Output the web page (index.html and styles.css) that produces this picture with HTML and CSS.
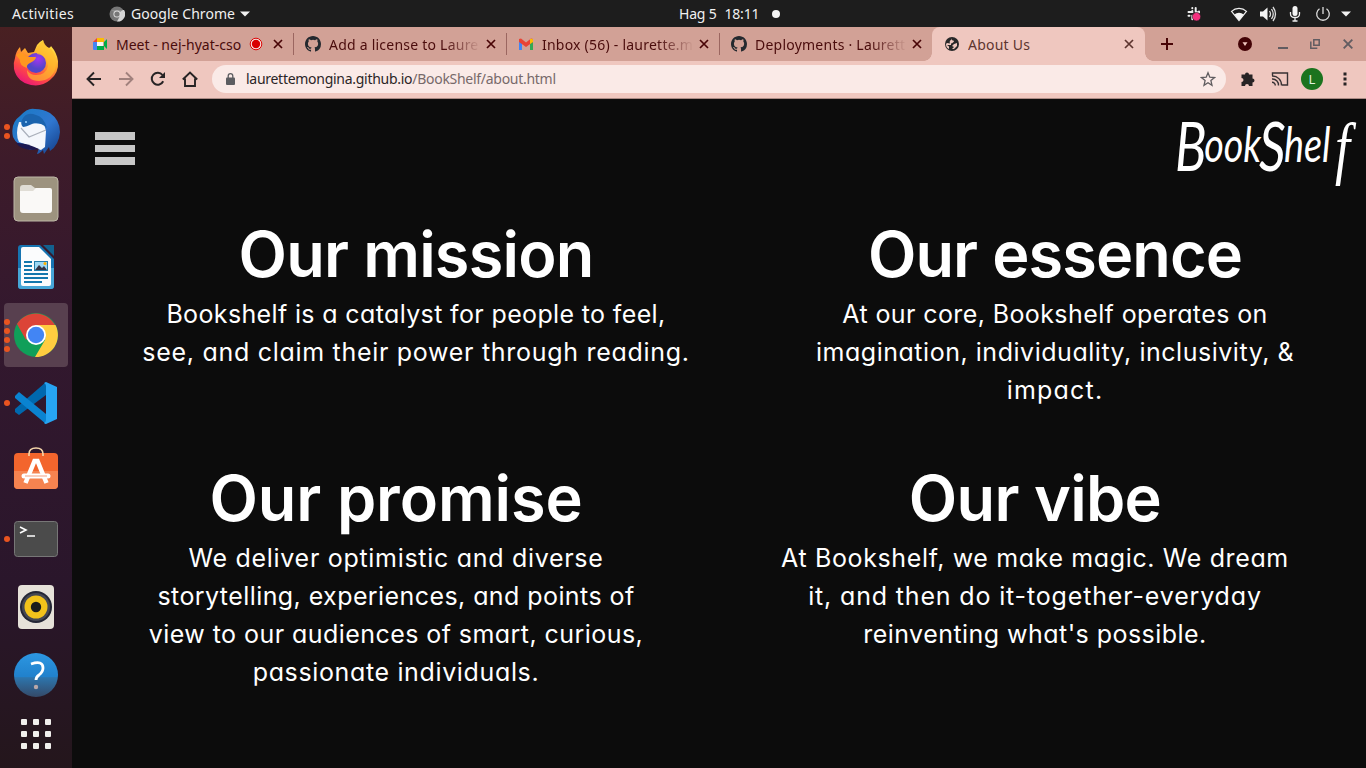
FILE: index.html
```html
<!DOCTYPE html>
<html lang="en">
<head>
<meta charset="utf-8">
<title>About Us</title>
<link rel="stylesheet" href="styles.css">
</head>
<body>
<header class="topbar">
  <span class="activities">Activities</span>
  <svg class="chromium" width="16" height="16" viewBox="0 0 16 16"><circle cx="8" cy="8" r="7.5" fill="#777"/><path d="M8 4h7a7.5 7.5 0 0 1-7 11.5L11 10z" fill="#d5d5d5"/><path d="M2 4h12L8 8z" fill="#8d8d8d"/><circle cx="8" cy="8" r="3.6" fill="#ddd"/><circle cx="8" cy="8" r="2.6" fill="#777"/></svg>
  <span class="app-name">Google Chrome</span>
  <svg class="caret" width="10" height="6" viewBox="0 0 10 6"><path d="M0 .5h10L5 5.5z" fill="#f2f2f2"/></svg>
  <div class="clock"><span>Hag 5</span><span>18:11</span><i class="notice"></i></div>
  <div class="indicators">
    <svg class="slack" width="16" height="16" viewBox="0 0 16 16"><g stroke="#eee" stroke-width="2" stroke-linecap="round"><path d="M6.300 2v.2M6.300 5v1H2.500M9.700 2v4M13 5.500v.8h-2M2.500 9.700h1M6.300 9.700v3.500"/></g><circle cx="10.500" cy="10.700" r="4.200" fill="#f5317f" stroke="#1d1d1d" stroke-width=".6"/></svg>
    <svg class="wifi" width="18" height="16" viewBox="0 0 18 16"><path d="M1.500 5.400a11 11 0 0 1 15 0L9 14.500z" fill="none" stroke="#eee" stroke-width="1.200"/><path d="M4.300 8.500a7 7 0 0 1 9.400 0L9 14.500z" fill="#f4f4f4"/></svg>
    <svg class="volume" width="18" height="16" viewBox="0 0 18 16"><path d="M1 5.500h3L8.500 1.500v13L4 10.500H1z" fill="#f4f4f4"/><path d="M10.500 5q2 3 0 6M12.500 3q3.500 5 0 10M14 1q5 7 0 14" fill="none" stroke="#ddd" stroke-width="1.300"/></svg>
    <svg class="mic" width="12" height="17" viewBox="0 0 12 17"><rect x="3.500" y="1" width="5" height="10" rx="2.500" fill="#f4f4f4"/><path d="M1.500 7v2q0 3.500 4.500 3.500t4.500-3.500V7M6 12.500V16M3.500 16h5" fill="none" stroke="#eee" stroke-width="1.300"/></svg>
    <svg class="power" width="16" height="16" viewBox="0 0 16 16"><path d="M4.500 2.700a6.300 6.300 0 1 0 7 0M8 1v7" fill="none" stroke="#ddd" stroke-width="1.300"/></svg>
    <svg width="10" height="6" viewBox="0 0 10 6"><path d="M0 .5h10L5 5.500z" fill="#f2f2f2"/></svg>
  </div>
</header>
<div class="desktop">
  <nav class="dock">
    <div class="dock-item"><svg width="48" height="48" viewBox="0 0 48 48"><defs><linearGradient id="fx" x1=".8" y1="0" x2=".25" y2="1"><stop offset="0" stop-color="#fff44f"/><stop offset=".4" stop-color="#ffa62b"/><stop offset=".7" stop-color="#ff4c43"/><stop offset="1" stop-color="#e8127c"/></linearGradient><radialGradient id="fp" cx=".6" cy=".3"><stop offset="0" stop-color="#a336f0"/><stop offset="1" stop-color="#5346c8"/></radialGradient></defs><path d="M3 19Q4 12 8 8l1 5 4-4 3 5 6-1 3-7q2-3 6-5 1 6 6 8 2-1 2-2 6 7 7 15 1 12-8 19-8 7-19 5Q5 43 2 30q-1-6 1-11z" fill="url(#fx)"/><circle cx="24" cy="24" r="10" fill="url(#fp)"/><path d="M4 16q4-4 8-1l4 3h8q0 3-6 6-4 2-3 5-8-3-7-8z" fill="#ff9820"/><path d="M31 1q-8 8-6 14 10 1 11 12-2 9-12 9-6 0-9-5 0 11 12 11 15-1 17-16Q44 12 37 9 33 7 31 1z" fill="#ffbd2d" opacity=".65"/></svg></div>
    <div class="dock-item"><i class="dots"><b></b><b></b></i><svg width="48" height="48" viewBox="0 0 48 48"><defs><linearGradient id="tb" x1="0" y1="0" x2="1" y2="1"><stop offset="0" stop-color="#187bc4"/><stop offset=".55" stop-color="#3077d0"/><stop offset="1" stop-color="#123b84"/></linearGradient></defs><path d="M8 9Q16 0 23 2q8 0 15 4 10 7 10 19-1 13-10 19l-1-4-5 7-1-4q-4 4-6 4l2-6-8 2Q4 38 1 30-2 16 8 9z" fill="url(#tb)"/><path d="M7 15l25 2 2 7-1 16-4 3L7 35Q3 27 7 15z" fill="#f4f7fc"/><path d="M9 21l8 9 17-7" fill="none" stroke="#aab0bb" stroke-width="1.200"/><path d="M10 13q4-9 14-5 8 2 11 13-8-7-15-4-6 3-9 3-3-3-1-7z" fill="#1b64ae"/><path d="M4 36q9-1 23 6l-6 1Q9 43 4 36z" fill="#1b1851"/><circle cx="14" cy="15" r="1" fill="#9bd5ff"/></svg></div>
    <div class="dock-item"><svg width="48" height="48" viewBox="0 0 48 48"><rect x="2" y="2" width="44" height="44" rx="4" fill="#9d937f" stroke="#bdb7a7"/><path d="M8 13q0-3 3-3h8l4 3h13v6H8z" fill="#e0ddd5"/><path d="M8 16h13l3-3h14q2 0 2 2v20q0 3-3 3H11q-3 0-3-3z" fill="#faf9f7"/></svg></div>
    <div class="dock-item"><svg width="48" height="48" viewBox="0 0 48 48"><path d="M9 2h19l14 14v27q0 3-3 3H9q-3 0-3-3V5q0-3 3-3z" fill="#1674b1"/><path d="M6 25h36v18q0 3-3 3H9q-3 0-3-3z" fill="#46a6d7"/><path d="M11 4h16l12 12v25q0 2-2 2H11q-2 0-2-2V6q0-2 2-2z" fill="#fbfcfd"/><path d="M31 2h11v11z" fill="#12618f"/><path d="M12 19h8M12 23h8M12 27h8M12 31h24M12 35h24M12 39h18" stroke="#1277ad" stroke-width="2"/><rect x="22.500" y="18.500" width="13" height="9" fill="#9ed8f4" stroke="#227ca9"/><path d="M23 27l4-5 3 3 2-2 3 4z" fill="#334"/><circle cx="33" cy="20.500" r="1.500" fill="#ffb000"/></svg></div>
    <div class="dock-item active"><i class="dots"><b></b><b></b><b></b><b></b></i><svg width="48" height="48" viewBox="0 0 48 48"><circle cx="24" cy="24" r="22" fill="#109f59"/><path d="M5 13A22 22 0 0 1 43 14H24L14 29z" fill="#dc4437"/><path d="M43.500 14A22 22 0 0 1 23 46L33 29q2-8-9-15z" fill="#ffcd40"/><circle cx="24" cy="24" r="10" fill="#fff"/><circle cx="24" cy="24" r="8.200" fill="#4285f4"/></svg></div>
    <div class="dock-item"><i class="dots"><b></b></i><svg width="48" height="48" viewBox="0 0 48 48"><path d="M34 3L3 30v3l4 3 27-20z" fill="#0068ae"/><path d="M3 17l4-4 27 22v10L3 19z" fill="#0a83d1"/><path d="M34 3l11 5v32l-11 5q-1 0-2-1 2-1 2-3V7q0-2-2-3z" fill="#27a4f2"/></svg></div>
    <div class="dock-item"><svg width="48" height="48" viewBox="0 2 48 48"><rect x="2" y="8" width="44" height="36" rx="4" fill="#f3652d"/><path d="M2 26h44v14q0 4-4 4H6q-4 0-4-4z" fill="#f58350"/><path d="M17 11V9q0-6 7-6t7 6v2" fill="none" stroke="#f6d7aa" stroke-width="1.600"/><path d="M13.500 38l9-22h3l9 22" fill="none" stroke="#fff" stroke-width="4.500"/><path d="M12 31h24" stroke="#fff" stroke-width="5" stroke-linecap="round"/><path d="M13 31h22" stroke="#f3a181"/></svg></div>
    <div class="dock-item"><i class="dots"><b></b></i><svg width="48" height="48" viewBox="0 0 48 48"><rect x="2.500" y="6.500" width="43" height="35" rx="3" fill="#4b4b4b" stroke="#777"/><path d="M8 12l6 3-6 3M15 21h8" fill="none" stroke="#fff" stroke-width="1.600"/></svg></div>
    <div class="dock-item"><svg width="48" height="48" viewBox="0 0 48 48"><rect x="6" y="2" width="36" height="44" rx="4" fill="#e6e2d9"/><circle cx="24" cy="24" r="16" fill="#242635"/><circle cx="24" cy="24" r="14" fill="#454853"/><circle cx="24" cy="24" r="11.500" fill="#f2c21b"/><circle cx="24" cy="24" r="5.200" fill="#1c1c1c"/></svg></div>
    <div class="dock-item"><svg width="48" height="48" viewBox="0 0 48 48"><defs><linearGradient id="hp" x1="0" y1="0" x2="0" y2="1"><stop offset="0" stop-color="#2c97e2"/><stop offset=".54" stop-color="#2181cc"/><stop offset=".56" stop-color="#2d75ad"/><stop offset="1" stop-color="#344968"/></linearGradient></defs><circle cx="24" cy="24" r="22" fill="url(#hp)"/><path d="M19 13q12-4 12 4 0 4-4 7-3 2-3 5" fill="none" stroke="#fff" stroke-width="2.800"/><circle cx="24" cy="36" r="2.200" fill="#b9a8a9"/></svg></div>
    <div class="apps"><b></b><b></b><b></b><b></b><b></b><b></b><b></b><b></b><b></b></div>
  </nav>
  <section class="browser">
    <div class="tabs">
      <div class="tab first"><svg class="fav" width="16" height="16" viewBox="0 0 16 16"><path d="M1 6l4-4v4z" fill="#ea4335"/><path d="M5 2h7v4H5z" fill="#fbbc04"/><path d="M1 6h4v8H2q-1 0-1-1z" fill="#4285f4"/><path d="M5 10h7v4H5zM12 6l3-3v10l-3-3z" fill="#00ac47"/><path d="M5 6h6v4H5z" fill="#f6f6f6"/></svg><span class="tab-title">Meet - nej-hyat-cso</span><svg class="rec" width="14" height="14" viewBox="0 0 14 14"><circle cx="7" cy="7" r="5.800" fill="#f6e2de" stroke="#dd0606" stroke-width="1"/><circle cx="7" cy="7" r="4.200" fill="#d90000"/></svg><svg class="close" width="10" height="10" viewBox="0 0 10 10"><path d="M1 1l8 8M9 1L1 9"/></svg></div>
      <div class="tab"><svg class="fav" width="16" height="16" viewBox="0 0 16 16"><path fill="#24292f" d="M8 0C3.580 0 0 3.580 0 8c0 3.540 2.290 6.530 5.470 7.590.4.070.55-.17.55-.38v-1.490c-2.010.37-2.530-.49-2.690-.94-.09-.23-.48-.94-.82-1.130-.28-.15-.68-.52-.01-.53.63-.01 1.080.58 1.230.82.72 1.210 1.870.87 2.330.66.07-.52.28-.87.51-1.070-1.780-.2-3.640-.89-3.640-3.950 0-.87.310-1.590.82-2.150-.08-.2-.36-1.020.08-2.120 0 0 .67-.21 2.200.82a7.500 7.500 0 0 1 4 0c1.530-1.040 2.200-.82 2.200-.82.440 1.100.160 1.920.08 2.120.51.56.82 1.270.82 2.150 0 3.070-1.870 3.750-3.650 3.950.29.25.54.73.54 1.480v2.200c0 .21.150.46.55.38A8 8 0 0 0 16 8c0-4.420-3.580-8-8-8z"/></svg><span class="tab-title fade">Add a license to Laure</span><svg class="close" width="10" height="10" viewBox="0 0 10 10"><path d="M1 1l8 8M9 1L1 9"/></svg></div>
      <div class="tab"><svg class="fav" width="16" height="16" viewBox="0 0 16 16"><path d="M1 4h3v10H1z" fill="#4285f4"/><path d="M12 4h3v10h-3z" fill="#34a853"/><path d="M1 3l2-.5 5 4 5-4 2 .5v3l-7 5-7-5z" fill="#ea4335"/><path d="M12 3q3-1 3 1v2l-3 2z" fill="#fbbc04"/></svg><span class="tab-title fade">Inbox (56) - laurette.m</span><svg class="close" width="10" height="10" viewBox="0 0 10 10"><path d="M1 1l8 8M9 1L1 9"/></svg></div>
      <div class="tab"><svg class="fav" width="16" height="16" viewBox="0 0 16 16"><path fill="#24292f" d="M8 0C3.580 0 0 3.580 0 8c0 3.540 2.290 6.530 5.470 7.590.4.070.55-.17.55-.38v-1.490c-2.010.37-2.530-.49-2.690-.94-.09-.23-.48-.94-.82-1.130-.28-.15-.68-.52-.01-.53.63-.01 1.080.58 1.230.82.72 1.210 1.870.87 2.330.66.07-.52.28-.87.51-1.070-1.780-.2-3.640-.89-3.640-3.950 0-.87.310-1.590.82-2.150-.08-.2-.36-1.020.08-2.120 0 0 .67-.21 2.200.82a7.500 7.500 0 0 1 4 0c1.530-1.040 2.200-.82 2.200-.82.440 1.100.160 1.920.08 2.120.51.56.82 1.270.82 2.150 0 3.070-1.870 3.750-3.650 3.950.29.25.54.73.54 1.480v2.200c0 .21.150.46.55.38A8 8 0 0 0 16 8c0-4.420-3.580-8-8-8z"/></svg><span class="tab-title fade">Deployments · Laurett</span><svg class="close" width="10" height="10" viewBox="0 0 10 10"><path d="M1 1l8 8M9 1L1 9"/></svg></div>
      <div class="tab current"><svg class="fav" width="16" height="16" viewBox="0 0 16 16"><circle cx="8" cy="8" r="7" fill="#282829"/><path d="M8 2q-1 2 1 2.500t0 2-2 .5 0 2H3l2 1.500 0 2.500Q2 12 2 8l1-1 3 .5Q5 5 7 4zM10 8l3-1v3l-3 3-2 0 2-2-2-1z" fill="#efc7bf"/></svg><span class="tab-title">About Us</span><svg class="close" width="10" height="10" viewBox="0 0 10 10"><path d="M1 1l8 8M9 1L1 9"/></svg></div>
      <div class="window-tools">
        <svg width="12" height="12" viewBox="0 0 12 12"><path d="M6 0v12M0 6h12" stroke="#480406" stroke-width="2"/></svg>
        <svg class="search-tabs" width="14" height="14" viewBox="0 0 14 14"><circle cx="7" cy="7" r="7" fill="#420306"/><path d="M4.500 5.200h5L7 9z" fill="#f0c7bf"/></svg>
        <svg class="minimize" width="10" height="10" viewBox="0 0 10 10"><path d="M0 9h10" stroke="#625c61" stroke-width="2"/></svg>
        <svg class="restore" width="10" height="10" viewBox="0 0 10 10"><path d="M3.800.8h5.400v5.400H3.800z" fill="none" stroke="#625c61" stroke-width="1.500"/><path d="M.8 2.500v6.700h6.500" fill="none" stroke="#625c61" stroke-width="1.500"/></svg>
        <svg class="quit" width="10" height="10" viewBox="0 0 10 10"><path d="M.7.7l8.600 8.600M9.300.7L.7 9.300" stroke="#625c61" stroke-width="1.900"/></svg>
      </div>
    </div>
    <div class="toolbar">
      <svg width="16" height="16" viewBox="0 0 16 16"><path d="M15 8H2M8 1.500L1.500 8 8 14.500" fill="none" stroke="#272324" stroke-width="1.900"/></svg>
      <svg width="16" height="16" viewBox="0 0 16 16"><path d="M1 8h13M8 1.500L14.500 8 8 14.500" fill="none" stroke="#a1817d" stroke-width="1.900"/></svg>
      <svg width="16" height="16" viewBox="0 0 16 16"><path d="M13.200 10.300A6 6 0 1 1 12.500 4" fill="none" stroke="#272324" stroke-width="2"/><path d="M15 1v6H9z" fill="#272324"/></svg>
      <svg width="16" height="16" viewBox="0 0 16 16"><path d="M.8 8.500L8 1.500l7.200 7M3 7.500V15h10V7.500" fill="none" stroke="#272324" stroke-width="1.900"/></svg>
      <div class="address"><svg width="9" height="12" viewBox="0 0 9 12"><rect y="4.500" width="9" height="7.500" rx="1" fill="#5c5d61"/><path d="M2.200 5V3a2.300 2.300 0 0 1 4.600 0v2" fill="none" stroke="#5c5d61" stroke-width="1.300"/></svg><span class="url">laurettemongina.github.io<span class="path">/BookShelf/about.html</span></span><svg class="star" width="16" height="16" viewBox="0 0 16 16"><path d="M8 1.800l1.800 4.400 4.700.4-3.600 3 1.100 4.700L8 11.800l-4 2.500 1.100-4.700-3.600-3 4.700-.4z" fill="none" stroke="#5f5c5f" stroke-width="1.300"/></svg></div>
      <div class="actions">
        <svg width="16" height="16" viewBox="0 0 16 16"><path d="M1.500 3.500H5a2 2 0 1 1 4 0h3.500v4a2 2 0 1 1 0 4V15H9a2 2 0 0 0-4 0H1.500v-4a2 2 0 0 0 0-4z" fill="#272324"/></svg>
        <svg class="cast" width="18" height="16" viewBox="0 0 18 16"><path d="M1.500 4.500v-2.500h15v12H11M1 8a6 6 0 0 1 6.500 6.500M1 5a9 9 0 0 1 9.500 9.500M1 11.200a3.200 3.200 0 0 1 3.300 3.300" fill="none" stroke="#383234" stroke-width="1.400"/></svg>
        <span class="avatar">L</span>
        <svg class="menu" width="4" height="14" viewBox="0 0 4 14"><path d="M.5.5h3v3h-3zM.5 5.500h3v3h-3zM.5 10.500h3v3h-3z" fill="#272324"/></svg>
      </div>
    </div>
    <main class="page">
      <div class="page-head">
        <div class="burger"><i></i><i></i><i></i></div>
        <svg class="logo" width="194" height="110" viewBox="0 -11 194 110" role="img" aria-label="BookShelf"><text class="logo-text" transform="translate(5 61) scale(.77 1)"><tspan class="tall">B</tspan><tspan dx="-3" dy="-9">ook</tspan><tspan class="tall" dx="-3" dy="9">S</tspan><tspan dx="-2" dy="-9">hel</tspan><tspan class="tail" dx="6" dy="9">f</tspan></text></svg>
      </div>
      <div class="row">
        <article>
          <h1 class="mission">Our mission</h1>
          <p><span class="m1">Bookshelf is a catalyst for people to feel,</span><br><span class="m2">see, and claim their power through reading.</span></p>
        </article>
        <article>
          <h1 class="essence">Our essence</h1>
          <p><span class="e1">At our core, Bookshelf operates on</span><br><span class="e2">imagination, individuality, inclusivity, &amp;</span><br><span class="e3">impact.</span></p>
        </article>
      </div>
      <div class="row lower">
        <article>
          <h1 class="promise">Our promise</h1>
          <p><span class="p1">We deliver optimistic and diverse</span><br><span class="p2">storytelling, experiences, and points of</span><br><span class="p3">view to our audiences of smart, curious,</span><br><span class="p4">passionate individuals.</span></p>
        </article>
        <article>
          <h1 class="vibe">Our vibe</h1>
          <p><span class="v1">At Bookshelf, we make magic. We dream</span><br><span class="v2">it, and then do it-together-everyday</span><br><span class="v3">reinventing what's possible.</span></p>
        </article>
      </div>
    </main>
  </section>
</div>
</body>
</html>
```
FILE: styles.css
```css
* { box-sizing: border-box; }
body { margin: 0; width: 1366px; height: 768px; overflow: hidden; background: #0c0c0c; font-family: "Noto Sans", "Open Sans", sans-serif; font-size: 14px; }
svg { display: block; flex: none; }
.topbar { position: relative; display: flex; align-items: center; height: 27px; padding: 0 15px 0 12px; background: #1d1d1d; color: #f0f0f0; white-space: nowrap; }
.activities { width: 62px; letter-spacing: .37px; }
.chromium { margin-left: 35px; }
.app-name { width: 104px; margin-left: 6px; letter-spacing: .05px; }
.caret { margin-left: 5px; }
.clock { position: absolute; left: 679px; top: 0; display: flex; align-items: center; gap: 8px; height: 27px; letter-spacing: -0.2px; }
.notice { width: 8px; height: 8px; margin-left: 5px; border-radius: 50%; background: #f4f4f4; }
.indicators { display: flex; align-items: center; margin-left: auto; }
.wifi { margin-left: 28px; }
.volume { margin-left: 11px; }
.mic { margin-left: 12px; }
.power { margin: 0 10px 0 14px; }

.desktop { display: flex; height: 741px; }
.dock { display: flex; flex-direction: column; align-items: center; gap: 4px; width: 72px; padding-top: 4px; background: linear-gradient(#492022, #3d1b2a 18%, #33182e 40%, #2a162b 75%, #24161c); }
.dock-item { position: relative; display: flex; align-items: center; justify-content: center; width: 64px; height: 64px; border-radius: 4px; }
.dock-item.active { background: #58404f; }
.dots { position: absolute; left: 0; top: 0; display: flex; flex-direction: column; justify-content: center; gap: 3px; height: 64px; }
.dots b { width: 6px; height: 6px; border-radius: 50%; background: #e95420; }
.apps { display: grid; grid-template-columns: repeat(3, 6px); gap: 6px; height: 46px; align-content: center; }
.apps b { height: 6px; border-radius: 1px; background: #f1efed; }

.browser { display: flex; flex-direction: column; width: 1294px; }
.tabs { display: flex; height: 34px; padding-left: 8px; background: #d2a196; color: #4a0c0c; }
.tab { position: relative; display: flex; align-items: center; width: 213px; padding: 0 10px 0 11px; flex: none; border-left: 1px solid transparent; border-image: linear-gradient(transparent 7px, #9b6660 7px, #9b6660 27px, transparent 27px) 1; }
.tab.first, .tab.current { border-image: none; }
.tab-title { width: 150px; margin-left: 8px; overflow: hidden; white-space: nowrap; letter-spacing: .23px; }
.first .tab-title { letter-spacing: 0; }
.fade { -webkit-mask-image: linear-gradient(90deg, #000 115px, transparent 152px); mask-image: linear-gradient(90deg, #000 115px, transparent 152px); }
.close { margin-left: 7px; }
.close path { stroke: #480406; stroke-width: 1.7; fill: none; }
.rec { position: absolute; left: 168px; top: 10px; }
.tab.current { border: 0; padding-left: 12px; border-radius: 8px 8px 0 0; background: #efc7bf; color: #5d352f; }
.current::before, .current::after { content: ""; position: absolute; bottom: 0; width: 8px; height: 8px; }
.current::before { left: -8px; background: radial-gradient(circle at 0 0, #d2a196 7.5px, #efc7bf 8px); }
.current::after { right: -8px; background: radial-gradient(circle at 100% 0, #d2a196 7.5px, #efc7bf 8px); }
.current .close { margin-left: 6px; }
.current .close path { stroke: #5d352f; }
.window-tools { display: flex; align-items: center; margin-left: 16px; }
.search-tabs { margin-left: 65px; }
.minimize { margin-left: 26px; }
.restore { margin-left: 22px; }
.quit { margin-left: 23px; }

.toolbar { display: flex; align-items: center; gap: 16px; height: 38px; padding: 0 19px 2px 14px; background: #efc7bf; border-bottom: 1px solid #ab8b85; }
.address { display: flex; flex: none; align-items: center; width: 1014px; height: 28px; margin-left: -2px; padding: 0 10px 0 14px; border-radius: 14px; background: #faeae7; color: #2b2526; }
.url { margin-left: 11px; white-space: nowrap; letter-spacing: -.28px; }
.path { color: #77696a; }
.star { margin-left: auto; }
.actions { display: flex; align-items: center; margin-left: -2px; }
.cast { margin-left: 15px; }
.avatar { width: 22px; height: 22px; margin-left: 12px; border-radius: 50%; background: #1b731e; color: #e3f2e1; font-size: 13px; line-height: 22px; text-align: center; }
.menu { margin-left: 20px; }

.page { flex: 1; background: #0c0c0c; color: #fff; }
.page-head { display: flex; justify-content: space-between; align-items: flex-start; height: 117px; padding: 0 2px 0 23px; }
.burger { padding-top: 33px; }
.burger i { display: block; width: 40px; height: 8px; margin-bottom: 5px; background: #c7c7c7; }
.burger i + i { height: 7px; }
.burger i + i + i { height: 8px; }
.logo-text { fill: #fff; font: italic 400 49px Lato, sans-serif; }
.tall { font-size: 68px; }
.tail { font: italic 400 70px "Liberation Serif", serif; }
.row { display: flex; gap: 79px; height: 244px; padding-left: 64px; font-family: Inter, sans-serif; font-feature-settings: "cv11"; }
.lower { padding-left: 44px; }
article { width: 560px; text-align: center; white-space: nowrap; }
h1 { margin: 0; font-size: 63px; font-weight: 600; line-height: 77px; }
p { margin: 2px 0 0; font-size: 25px; line-height: 38px; }
.mission { letter-spacing: -.8px; }
.essence { letter-spacing: -.9px; }
.promise { letter-spacing: -.1px; }
.vibe { letter-spacing: -.7px; }
.m1 { letter-spacing: .36px; }
.m2 { letter-spacing: .71px; }
.e1 { letter-spacing: .4px; }
.e2 { letter-spacing: .53px; }
.e3 { letter-spacing: 1.2px; }
.p1 { letter-spacing: .7px; }
.p2 { letter-spacing: .42px; }
.p3 { letter-spacing: .44px; }
.p4 { letter-spacing: .64px; }
.v1 { letter-spacing: .63px; }
.v2 { letter-spacing: .84px; }
.v3 { letter-spacing: .46px; }
```
